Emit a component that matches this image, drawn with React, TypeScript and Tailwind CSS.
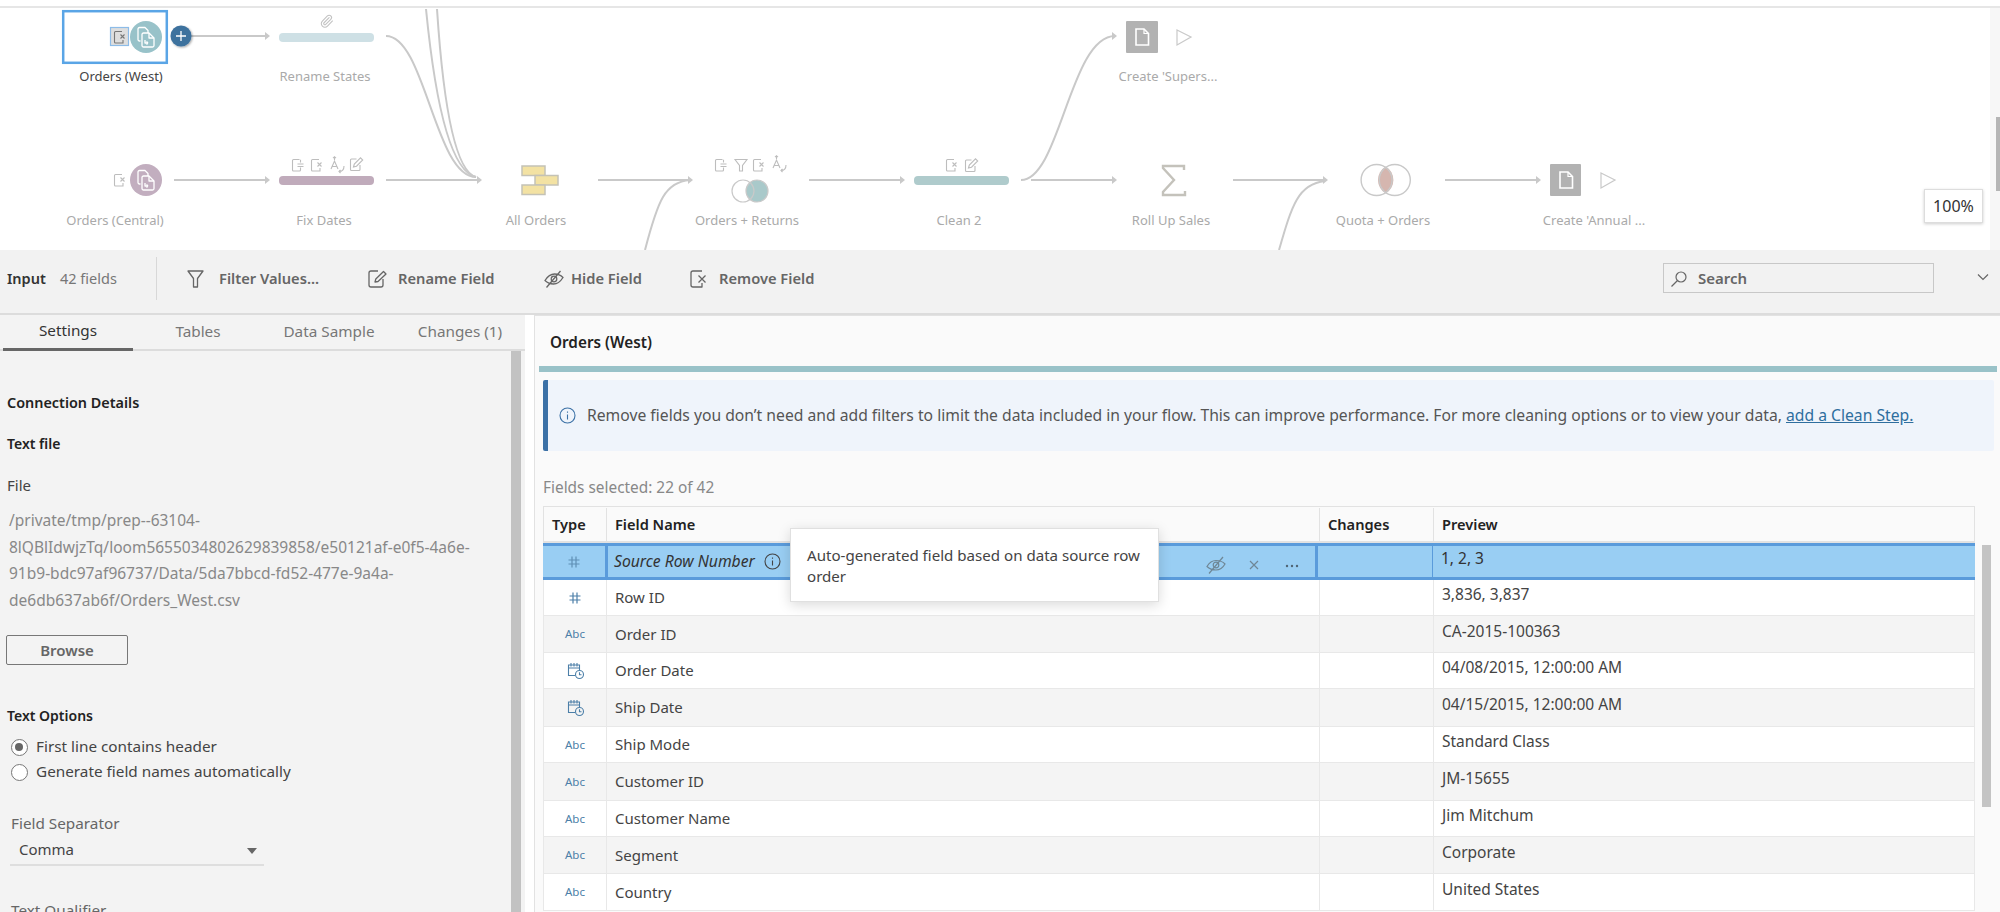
import React from "react";

const G = "#c9c9c9";

function Arrow({ x, y }: { x: number; y: number }) {
  return <path d={`M${x - 5} ${y - 4}L${x} ${y}L${x - 5} ${y + 4}z`} fill={G} />;
}
function Line({ x1, x2, y }: { x1: number; x2: number; y: number }) {
  return (
    <g>
      <path d={`M${x1} ${y}H${x2 - 3}`} stroke={G} strokeWidth={2.2} />
      <Arrow x={x2} y={y} />
    </g>
  );
}
function RemoveI({ x, y, c = "#bdbdbd" }: { x: number; y: number; c?: string }) {
  return (
    <g transform={`translate(${x - 7} ${y - 7})`} fill="none" stroke={c} strokeWidth={1.1}>
      <path d="M9 1.5H2.5a1 1 0 0 0-1 1v9.500a1 1 0 0 0 1 1H10V10" />
      <path d="M7.500 4.500l4 4M11.500 4.500l-4 4" />
    </g>
  );
}
function SplitI({ x, y }: { x: number; y: number }) {
  return (
    <g transform={`translate(${x - 7} ${y - 7})`} fill="none" stroke="#bdbdbd" strokeWidth={1.1}>
      <path d="M8.500 1.500H2.500a1 1 0 0 0-1 1v9.500a1 1 0 0 0 1 1h6a1 1 0 0 0 1-1V9.500M9.500 1.800V4.500" />
      <path d="M6.500 6h6M6.500 8.500h6" />
    </g>
  );
}
function RenameI({ x, y }: { x: number; y: number }) {
  return (
    <g transform={`translate(${x - 8} ${y - 9})`} fill="none" stroke="#bdbdbd" strokeWidth={1.1}>
      <path d="M2 13L5.500 5L9 13M3.200 10.500h4.600M5.500 4V0.800M4 2.200l1.500-1.500L7 2.200" />
      <path d="M15 10c0 4-2 5.500-5 5.500M11.500 14l-1.500 1.500 1.500 1.500" />
    </g>
  );
}
function EditI({ x, y }: { x: number; y: number }) {
  return (
    <g transform={`translate(${x - 7} ${y - 7})`} fill="none" stroke="#bdbdbd" strokeWidth={1.1}>
      <path d="M7.500 2H2.500a1 1 0 0 0-1 1v9.500a1 1 0 0 0 1 1H10a1 1 0 0 0 1-1V8" />
      <path d="M4.500 10l.8-3L11.500 0.800l2.200 2.200L7.500 9.200z" />
    </g>
  );
}
function FilterI({ x, y }: { x: number; y: number }) {
  return <path transform={`translate(${x - 7} ${y - 7})`} d="M1 1.500h12L8.500 7.500v5.500h-3V7.500z" fill="none" stroke="#bdbdbd" strokeWidth={1.1} />;
}
function Docs({ x, y }: { x: number; y: number }) {
  return (
    <g transform={`translate(${x - 9} ${y - 10})`} fill="none" stroke="#fff" strokeWidth={1.3} strokeLinejoin="round">
      <path d="M3.500 14H2.500a1.500 1.500 0 0 1-1.500-1.500V2A1.500 1.500 0 0 1 2.500.5H8l3 3V6" />
      <path d="M6.500 6H12l5 5v7.500a1.500 1.500 0 0 1-1.500 1.500H6.500A1.500 1.500 0 0 1 5 18.500V7.500A1.500 1.500 0 0 1 6.500 6z" />
      <path d="M12 6v5h5" />
      <path d="M8 13v3h3" />
      <path d="M11 16l-1.500-1.500M11 16l-1.500 1.500" />
    </g>
  );
}
function Output({ x, y, w, top, h }: { x: number; y: number; w: number; top: number; h: number }) {
  return (
    <g>
      <rect x={x} y={top} width={w} height={h} fill="#b2b2b2" rx={1} />
      <path d={`M${x + 10} ${y - 8}h8l4.500 4.500V${y + 8}H${x + 10}z`} fill="none" stroke="#fff" strokeWidth={1.6} />
      <path d={`M${x + 18} ${y - 8}v4.500h4.500`} fill="none" stroke="#fff" strokeWidth={1.2} />
      <path d={`M${x + 51} ${y - 7}L${x + 65} ${y}L${x + 51} ${y + 8}z`} fill="none" stroke="#c9c9c9" strokeWidth={1.2} />
    </g>
  );
}

function Canvas() {
  return (
    <svg className="absolute left-0 top-0" width={2000} height={250} viewBox="0 0 2000 250">
      <defs>
        <filter id="sh" x="-50%" y="-50%" width="200%" height="200%">
          <feDropShadow dx="1" dy="1" stdDeviation="1.200" floodOpacity="0.350" />
        </filter>
      </defs>
      <g fill="none" stroke={G} strokeWidth={2}>
        <path d="M386 36C425 36 435 177 476 177" />
        <path d="M426 9C432 70 445 170 476 177" />
        <path d="M437 9C441 70 450 170 476 177" />
        <path d="M645 250C658 200 665 182 690 180" />
        <path d="M1021 180C1060 180 1070 36 1115 36" />
        <path d="M1279 250C1292 205 1298 184 1325 181" />
      </g>
      <Line x1={184} x2={270} y={36} />
      <Line x1={174} x2={270} y={180} />
      <Line x1={386} x2={482} y={180} />
      <Line x1={598} x2={693} y={180} />
      <Line x1={809} x2={905} y={180} />
      <Line x1={1031} x2={1117} y={180} />
      <Line x1={1233} x2={1328} y={180} />
      <Line x1={1445} x2={1541} y={180} />
      <Arrow x={1117} y={36} />

      {/* Orders (West) */}
      <rect x={63.2} y={11.2} width={103.6} height={51.6} fill="#fff" stroke="#5aa5e6" strokeWidth={2.5} />
      <rect x={110.5} y={27.5} width={18} height={18} fill="#dedede" stroke="#8dbce8" strokeWidth={1.2} />
      <RemoveI x={120} y={37} c="#777" />
      <circle cx={146} cy={37} r={16} fill="#98c2c9" />
      <Docs x={146} y={37} />
      <circle cx={181} cy={36} r={10.5} fill="#3e729e" filter="url(#sh)" />
      <path d="M181 31v10M176 36h10" stroke="#fff" strokeWidth={1.3} />
      <g transform="translate(319.500 14) scale(0.6)" fill="none" stroke="#c2c2c2" strokeWidth={1.8} strokeLinecap="round">
        <path d="m16 6-8.414 8.586a2 2 0 0 0 2.829 2.829l8.414-8.586a4 4 0 1 0-5.657-5.657l-8.379 8.551a6 6 0 1 0 8.485 8.485l8.379-8.551" />
      </g>

      {/* bars */}
      <rect x={279} y={33} width={95} height={9} rx={4} fill="#cee0e5" />
      <rect x={279} y={176} width={95} height={9} rx={4} fill="#c0abbb" />
      <rect x={914} y={176} width={95} height={9} rx={4} fill="#afcbcc" />

      {/* Orders (Central) */}
      <RemoveI x={120} y={180} />
      <circle cx={146} cy={180} r={16} fill="#c2aebf" />
      <Docs x={146} y={180} />

      {/* Fix dates icons */}
      <SplitI x={298} y={165} />
      <RemoveI x={317} y={165} />
      <RenameI x={337} y={165} />
      <EditI x={356} y={164} />

      {/* union */}
      <g fill="#f3e2a3" stroke="#c4c2b6" strokeWidth={1.5}>
        <rect x={522} y={166} width={23} height={9.5} />
        <rect x={535} y={175.5} width={23} height={9.5} />
        <rect x={522} y={185} width={23} height={9.5} />
      </g>

      {/* join */}
      <SplitI x={721} y={165} />
      <FilterI x={741} y={165} />
      <RemoveI x={759} y={165} />
      <RenameI x={779} y={164} />
      <circle cx={757} cy={191} r={11} fill="#a9c9ca" />
      <circle cx={743} cy={191} r={11} fill="none" stroke="#c9c9c9" strokeWidth={1.2} />
      <circle cx={757} cy={191} r={11} fill="none" stroke="#c9c9c9" strokeWidth={1.2} />

      {/* clean 2 icons */}
      <RemoveI x={952} y={165} />
      <EditI x={971} y={165} />

      {/* outputs */}
      <Output x={1126} y={37} w={32} top={21} h={32} />
      <Output x={1550} y={180} w={31} top={164} h={32} />

      {/* sigma */}
      <path d="M1184 170V166H1163V168L1174 180L1163 192V195H1185V191" fill="none" stroke="#c4c2bb" strokeWidth={2.4} />

      {/* quota join */}
      <path d="M1385.700 166.600a15.500 15.500 0 0 1 0 26.800a15.500 15.500 0 0 1 0-26.800z" fill="#d5b6af" />
      <circle cx={1376.6} cy={180} r={15.5} fill="none" stroke="#c9c9c9" strokeWidth={1.4} />
      <circle cx={1394.8} cy={180} r={15.5} fill="none" stroke="#c9c9c9" strokeWidth={1.4} />
    </svg>
  );
}

function NodeLabel({ className, children }: { className: string; children: React.ReactNode }) {
  return <div className={`absolute -translate-x-1/2 whitespace-nowrap text-[13px] leading-5 ${className}`}>{children}</div>;
}

const rows = [
  { t: "num", n: "Row ID", p: "3,836, 3,837", h: "h-[36px]", alt: false },
  { t: "abc", n: "Order ID", p: "CA-2015-100363", h: "h-[37px]", alt: true },
  { t: "date", n: "Order Date", p: "04/08/2015, 12:00:00 AM", h: "h-[36px]", alt: false },
  { t: "date", n: "Ship Date", p: "04/15/2015, 12:00:00 AM", h: "h-[38px]", alt: true },
  { t: "abc", n: "Ship Mode", p: "Standard Class", h: "h-[36px]", alt: false },
  { t: "abc", n: "Customer ID", p: "JM-15655", h: "h-[38px]", alt: true },
  { t: "abc", n: "Customer Name", p: "Jim Mitchum", h: "h-[36px]", alt: false },
  { t: "abc", n: "Segment", p: "Corporate", h: "h-[37px]", alt: true },
  { t: "abc", n: "Country", p: "United States", h: "h-[37px]", alt: false },
];

function Hash({ c = "#4c7fa8" }: { c?: string }) {
  return (
    <svg width={14} height={14} viewBox="0 0 14 14" fill="none" stroke={c} strokeWidth={1.2}>
      <path d="M5 1.500V12.500M9 1.500V12.500M1.500 5H12.500M1.500 9H12.500" />
    </svg>
  );
}
function DateI() {
  return (
    <svg width={18} height={18} viewBox="0 0 18 18" fill="none" stroke="#4c7fa8" strokeWidth={1.1} className="ml-[2px]">
      <path d="M8 13.500H1.500V3h11v5M1.500 6h11M4 1v3.500M7 1v3.500M10 1v3.500" />
      <circle cx={12.5} cy={12.5} r={4} />
      <path d="M12.500 10.200v2.500h2" />
    </svg>
  );
}
function TypeCell({ t }: { t: string }) {
  if (t === "num") return <Hash />;
  if (t === "date") return <DateI />;
  return <span className="text-[11.5px] text-[#4c7fa8]">Abc</span>;
}

export default function App() {
  const toolText = "text-[14.7px] font-semibold text-[#666]";
  return (
    <div className="relative h-[912px] w-[2000px] overflow-hidden bg-white font-['Noto_Sans',sans-serif] text-[#333]">
      <div className="absolute left-0 top-[6px] h-[2px] w-[2000px] bg-[#e6e6e6]" />
      <Canvas />
      <div className="absolute left-[1990px] top-[8px] h-[242px] w-[10px] bg-[#f7f7f7]">
        <div className="absolute left-[6px] top-[109px] h-[74px] w-[4px] bg-[#b5b5b5]" />
      </div>

      <NodeLabel className="left-[121px] top-[66px] text-[#444]">Orders (West)</NodeLabel>
      <NodeLabel className="left-[325px] top-[66px] text-[#aaa]">Rename States</NodeLabel>
      <NodeLabel className="left-[1168px] top-[66px] text-[#aaa]">Create 'Supers...</NodeLabel>
      <NodeLabel className="left-[115px] top-[210px] text-[#aaa]">Orders (Central)</NodeLabel>
      <NodeLabel className="left-[324px] top-[210px] text-[#aaa]">Fix Dates</NodeLabel>
      <NodeLabel className="left-[536px] top-[210px] text-[#aaa]">All Orders</NodeLabel>
      <NodeLabel className="left-[747px] top-[210px] text-[#aaa]">Orders + Returns</NodeLabel>
      <NodeLabel className="left-[959px] top-[210px] text-[#aaa]">Clean 2</NodeLabel>
      <NodeLabel className="left-[1171px] top-[210px] text-[#aaa]">Roll Up Sales</NodeLabel>
      <NodeLabel className="left-[1383px] top-[210px] text-[#aaa]">Quota + Orders</NodeLabel>
      <NodeLabel className="left-[1594px] top-[210px] text-[#aaa]">Create 'Annual ...</NodeLabel>

      <div className="absolute left-[1924px] top-[189px] flex h-[34px] w-[59px] items-center justify-center border border-[#ddd] bg-white text-[16px] text-[#333] shadow-[0_1px_3px_rgba(0,0,0,0.2)]">
        100%
      </div>

      {/* Toolbar */}
      <div className="absolute left-0 top-[250px] h-[65px] w-[2000px] border-b-2 border-[#dcdcdc] bg-[#f2f2f2]">
        <span className="absolute left-[7px] top-[18px] text-[14.5px] font-semibold leading-5 text-[#333]">Input</span>
        <span className="absolute left-[60px] top-[18px] text-[14.5px] leading-5 text-[#777]">42 fields</span>
        <div className="absolute left-[156px] top-[7px] h-[43px] w-px bg-[#d8d8d8]" />

        <svg className="absolute left-[187px] top-[20px]" width={17} height={18} viewBox="0 0 17 18" fill="none" stroke="#666" strokeWidth={1.3} strokeLinejoin="round">
          <path d="M1 1h15L10.500 8.500V17H6.500V8.500z" />
        </svg>
        <span className={`absolute left-[219px] top-[18px] leading-5 ${toolText}`}>Filter Values...</span>

        <svg className="absolute left-[368px] top-[20px]" width={20} height={18} viewBox="0 0 20 18" fill="none" stroke="#666" strokeWidth={1.3} strokeLinejoin="round">
          <path d="M10 1H3a2 2 0 0 0-2 2v12a2 2 0 0 0 2 2h10a2 2 0 0 0 2-2V9" />
          <path d="M7 12l.8-3L15.500 1.500l2.500 2.500L10 11.500z" />
        </svg>
        <span className={`absolute left-[398px] top-[18px] leading-5 ${toolText}`}>Rename Field</span>

        <svg className="absolute left-[544px] top-[20px]" width={20} height={18} viewBox="0 0 20 18" fill="none" stroke="#666" strokeWidth={1.3}>
          <path d="M1 10.500C3.500 6.500 7 4 10.500 4S16.500 5 19 7.500C16.500 11.500 13 14 9.500 14S3.500 13 1 10.500z" />
          <circle cx={10} cy={9} r={2.8} />
          <path d="M2.500 17.500L16.500 1" />
        </svg>
        <span className={`absolute left-[571px] top-[18px] leading-5 ${toolText}`}>Hide Field</span>

        <svg className="absolute left-[690px] top-[20px]" width={18} height={18} viewBox="0 0 18 18" fill="none" stroke="#666" strokeWidth={1.3} strokeLinejoin="round">
          <path d="M12 1H3a2 2 0 0 0-2 2v12a2 2 0 0 0 2 2h9v-4" />
          <path d="M8.500 5.500l7 7M15.500 5.500l-7 7" />
        </svg>
        <span className={`absolute left-[719px] top-[18px] leading-5 ${toolText}`}>Remove Field</span>

        <div className="absolute left-[1663px] top-[13px] h-[30px] w-[271px] border border-[#c8c8c8] bg-[#f2f2f2]">
          <svg className="absolute left-[6px] top-[6px]" width={18} height={18} viewBox="0 0 18 18" fill="none" stroke="#666" strokeWidth={1.2}>
            <circle cx={11} cy={7} r={5} />
            <path d="M7.500 10.500L1.500 16.500" />
          </svg>
          <span className="absolute left-[34px] top-[4px] text-[15px] font-semibold leading-5 text-[#666]">Search</span>
        </div>
        <svg className="absolute left-[1977px] top-[21px]" width={12} height={12} viewBox="0 0 12 12" fill="none" stroke="#666" strokeWidth={1.2}>
          <path d="M1 3.500L6 8.500L11 3.500" />
        </svg>
      </div>

      {/* Left panel */}
      <div className="absolute left-0 top-[315px] h-[597px] w-[525px] bg-[#f3f3f3]">
        <div className="flex h-[36px] w-[525px] border-b-2 border-[#dcdcdc] text-[15.3px]">
          <div className="relative ml-[3px] flex w-[130px] items-center justify-center pb-[3px] text-[#333]">
            Settings
            <div className="absolute bottom-[-2px] left-0 h-[3px] w-[130px] bg-[#666]" />
          </div>
          <div className="w-[130px] pt-[5px] text-center text-[#777]">Tables</div>
          <div className="w-[132px] pt-[5px] text-center text-[#777]">Data Sample</div>
          <div className="w-[130px] pt-[5px] text-center text-[#777]">Changes (1)</div>
        </div>
        <div className="absolute left-[511px] top-[36px] h-[561px] w-[10px] bg-[#c2c2c2]" />

        <div className="absolute left-[7px] top-[78px] text-[14.4px] font-semibold leading-5 text-[#222]">Connection Details</div>
        <div className="absolute left-[7px] top-[119px] text-[14px] font-semibold leading-5 text-[#222]">Text file</div>
        <div className="absolute left-[7px] top-[160px] text-[15px] leading-5 text-[#444]">File</div>
        <div className="absolute left-[9px] top-[192px] w-[495px] text-[15.5px] leading-[26.700px] text-[#888]">
          <div>/private/tmp/prep--63104-</div>
          <div>8lQBlIdwjzTq/loom5655034802629839858/e50121af-e0f5-4a6e-</div>
          <div>91b9-bdc97af96737/Data/5da7bbcd-fd52-477e-9a4a-</div>
          <div>de6db637ab6f/Orders_West.csv</div>
        </div>
        <div className="absolute left-[6px] top-[320px] flex h-[30px] w-[122px] items-center justify-center rounded-[2px] border-[1.500px] border-[#777] text-[15px] font-semibold text-[#666]">
          Browse
        </div>
        <div className="absolute left-[7px] top-[391px] text-[14px] font-semibold leading-5 text-[#222]">Text Options</div>
        <div className="absolute left-[10.500px] top-[423.500px] flex h-[17px] w-[17px] items-center justify-center rounded-full border border-[#777] bg-white">
          <div className="h-[8px] w-[8px] rounded-full bg-[#666]" />
        </div>
        <div className="absolute left-[36px] top-[421px] text-[15.3px] leading-5 text-[#444]">First line contains header</div>
        <div className="absolute left-[10.500px] top-[448.500px] h-[17px] w-[17px] rounded-full border border-[#777] bg-white" />
        <div className="absolute left-[36px] top-[446px] text-[15.3px] leading-5 text-[#444]">Generate field names automatically</div>
        <div className="absolute left-[11px] top-[498px] text-[15.3px] leading-5 text-[#666]">Field Separator</div>
        <div className="absolute left-[19px] top-[524px] text-[15px] leading-5 text-[#444]">Comma</div>
        <div className="absolute left-[247px] top-[533px] h-0 w-0 border-x-[5px] border-t-[6px] border-x-transparent border-t-[#666]" />
        <div className="absolute left-[10px] top-[549px] h-[2px] w-[254px] bg-[#dedede]" />
        <div className="absolute left-[11px] top-[585px] text-[15.3px] leading-5 text-[#666]">Text Qualifier</div>
      </div>

      {/* Right panel */}
      <div className="absolute left-[534px] top-[315px] h-[597px] w-[1466px] border-l border-t border-[#e2e2e2] bg-[#fafafa]">
        <div className="absolute left-[15px] top-[16px] text-[15.3px] font-semibold leading-5 text-[#222]">Orders (West)</div>
        <div className="absolute left-[4px] top-[50px] h-[6px] w-[1458px] bg-[#99c2c8]" />
        <div className="absolute left-[8px] top-[64px] flex h-[71px] w-[1451px] items-center rounded-[2px] border-l-[5px] border-[#3c71a6] bg-[#eff4fb] text-[15.7px] text-[#555]">
          <svg className="ml-[11px] mr-[11px]" width={17} height={17} viewBox="0 0 17 17" fill="none" stroke="#3c71a6" strokeWidth={1.1}>
            <circle cx={8.5} cy={8.5} r={7.5} />
            <path d="M8.500 7.500v5M8.500 4.500v1.300" />
          </svg>
          <span>
            Remove fields you don’t need and add filters to limit the data included in your flow. This can improve performance. For more cleaning options or to view your data,{" "}
            <span className="text-[#2e6e9e] underline">add a Clean Step.</span>
          </span>
        </div>
        <div className="absolute left-[8px] top-[162px] text-[15.4px] leading-5 text-[#888]">Fields selected: 22 of 42</div>

        {/* Table */}
        <div className="absolute left-[8px] top-[190px] w-[1432px]">
          <div className="grid h-[37px] grid-cols-[62px_713px_114px_1fr] border border-b-2 border-[#e2e2e2] pt-[1px] text-[14.6px] font-semibold text-[#222]">
            <div className="flex items-center pl-[8px]">Type</div>
            <div className="flex items-center border-l border-[#e2e2e2] pl-[8px]">Field Name</div>
            <div className="flex items-center border-l border-[#e2e2e2] pl-[8px]">Changes</div>
            <div className="flex items-center border-l border-[#e2e2e2] pl-[8px]">Preview</div>
          </div>

          <div className="grid h-[37px] grid-cols-[62px_713px_114px_1fr] border-y-[3px] border-[#5a9bdb] bg-[#99cef3] text-[15px]">
            <div className="flex items-center justify-center">
              <Hash c="#5f8fb5" />
            </div>
            <div className="flex items-center border-x-[3px] border-[#5a9bdb] pl-[6px] text-[15.7px] italic text-[#333]">
              Source Row Number
              <svg className="ml-[9px]" width={17} height={17} viewBox="0 0 17 17" fill="none" stroke="#444" strokeWidth={1.1}>
                <circle cx={8.5} cy={8.5} r={7.5} />
                <path d="M8.500 7.500v5M8.500 4.500v1.300" />
              </svg>
            </div>
            <div />
            <div className="flex items-center border-l border-[#5a9bdb] pb-[5px] pl-[8px] text-[15.5px] text-[#333]">1, 2, 3</div>
          </div>

          {rows.map((r) => (
            <div
              key={r.n}
              className={`grid grid-cols-[62px_713px_114px_1fr] border-x border-b border-[#e8e8e8] text-[15px] text-[#444] ${r.h} ${r.alt ? "bg-[#f4f4f4]" : "bg-white"}`}
            >
              <div className="flex items-center justify-center">
                <TypeCell t={r.t} />
              </div>
              <div className="flex items-center border-l border-[#e8e8e8] pl-[8px]">{r.n}</div>
              <div className="border-l border-[#e8e8e8]" />
              <div className="flex items-center border-l border-[#e8e8e8] pb-[5px] pl-[8px] text-[15.5px]">{r.p}</div>
            </div>
          ))}
        </div>

        <div className="absolute left-[1446.500px] top-[229px] h-[262px] w-[9.500px] bg-[#c4c4c4]" />
      </div>

      {/* Row actions */}
      <svg className="absolute left-[1205px] top-[555px]" width={100} height={20} viewBox="0 0 100 20" fill="none" stroke="#6f8796" strokeWidth={1.2}>
        <path d="M2 11.500C4 8 7 5.500 11 5.500S17.500 6.500 20 9C18 12.500 15 15 11 15S4.500 14 2 11.500z" />
        <circle cx={11} cy={10} r={2.8} />
        <path d="M4 18.500L18 2" />
        <path d="M45 6l8 8M53 6l-8 8" />
        <g fill="#4f6575" stroke="none">
          <circle cx={82} cy={11} r={1.2} />
          <circle cx={87} cy={11} r={1.2} />
          <circle cx={92} cy={11} r={1.2} />
        </g>
      </svg>

      {/* Tooltip */}
      <div className="absolute left-[790px] top-[528px] h-[74px] w-[369px] border border-[#e0e0e0] bg-white pl-[16px] pt-[16px] text-[15.1px] leading-[21px] text-[#444] shadow-[0_3px_12px_rgba(0,0,0,0.15)]">
        Auto-generated field based on data source row
        <br />
        order
      </div>
    </div>
  );
}
